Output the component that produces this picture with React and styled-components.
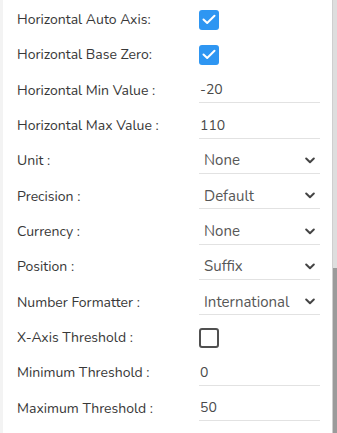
import styled, { createGlobalStyle } from 'styled-components'

const GlobalStyle = createGlobalStyle`
  html, body {
    margin: 0;
    padding: 0;
    background: #fff;
    overflow: hidden;
  }
  body {
    font-family: 'Nunito', 'Open Sans', 'Noto Sans', sans-serif;
  }
`

const Frame = styled.div`
  display: flex;
  width: 337px;
  height: 433px;
  overflow: hidden;
`

const Panel = styled.div`
  flex: 1;
  border-left: 3px solid #f3f3f3;
  padding-top: 2px;
  background: #fff;
`

const Row = styled.div`
  display: grid;
  grid-template-columns: 182px 121px;
  align-items: center;
  height: 35.33px;
  padding-left: 14px;
`

const Label = styled.span`
  font-size: 14px;
  color: #383838;
  white-space: nowrap;
`

const Box = styled.span`
  box-sizing: border-box;
  width: 20px;
  height: 20px;
  border-radius: 3px;
  display: flex;
  align-items: center;
  justify-content: center;
  background: ${p => (p.checked ? '#2e96f2' : '#fff')};
  border: ${p => (p.checked ? 'none' : '2px solid #505050')};
`

const Field = styled.div`
  box-sizing: border-box;
  height: 26px;
  display: flex;
  align-items: center;
  justify-content: space-between;
  border-bottom: 1px solid #e2e2e2;
  padding: 0 5px 0 ${p => (p.select ? '5px' : '1px')};
  font-size: ${p => (p.select ? '15px' : '14px')};
  color: ${p => (p.select ? '#575757' : '#4a4a4a')};
  white-space: nowrap;
`

const Track = styled.div`
  width: 4px;
  background: #dedede;
  border-left: 1px solid #cfcfcf;
  display: flex;
  flex-direction: column;
  justify-content: flex-end;
`

const Thumb = styled.div`
  height: 165px;
  background: #9b9b9b;
`

const Check = ({ checked }) => (
  <Box checked={checked}>
    {checked && (
      <svg width="14" height="11" viewBox="0 0 14 11">
        <polyline points="1.5,5.5 5.2,9 12.5,1.8" fill="none" stroke="#fff" strokeWidth="2" strokeLinecap="round" strokeLinejoin="round" />
      </svg>
    )}
  </Box>
)

const Chevron = () => (
  <svg width="10" height="7" viewBox="0 0 10 7">
    <polyline points="1.2,1.5 5,5.2 8.8,1.5" fill="none" stroke="#444" strokeWidth="2" strokeLinecap="round" strokeLinejoin="round" />
  </svg>
)

const rows = [
  { label: 'Horizontal Auto Axis:', type: 'check', value: true },
  { label: 'Horizontal Base Zero:', type: 'check', value: true },
  { label: 'Horizontal Min Value :', type: 'input', value: '-20' },
  { label: 'Horizontal Max Value :', type: 'input', value: '110' },
  { label: 'Unit :', type: 'select', value: 'None' },
  { label: 'Precision :', type: 'select', value: 'Default' },
  { label: 'Currency :', type: 'select', value: 'None' },
  { label: 'Position :', type: 'select', value: 'Suffix' },
  { label: 'Number Formatter :', type: 'select', value: 'International' },
  { label: 'X-Axis Threshold :', type: 'check', value: false },
  { label: 'Minimum Threshold :', type: 'input', value: '0' },
  { label: 'Maximum Threshold :', type: 'input', value: '50' },
]

export default function App() {
  return (
    <Frame>
      <GlobalStyle />
      <Panel>
        {rows.map(r => (
          <Row key={r.label}>
            <Label>{r.label}</Label>
            {r.type === 'check' && <Check checked={r.value} />}
            {r.type === 'input' && <Field>{r.value}</Field>}
            {r.type === 'select' && (
              <Field select>
                <span>{r.value}</span>
                <Chevron />
              </Field>
            )}
          </Row>
        ))}
      </Panel>
      <Track>
        <Thumb />
      </Track>
    </Frame>
  )
}
